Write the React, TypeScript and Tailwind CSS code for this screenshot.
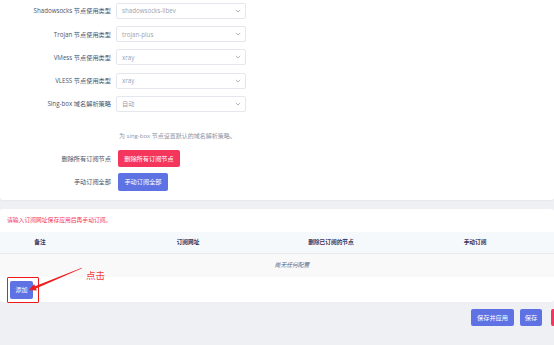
import React from "react";

const Chevron = () => (
  <svg width="6" height="4" viewBox="0 0 6 4" className="shrink-0">
    <path d="M0.8 0.9 L3 3 L5.2 0.9" fill="none" stroke="#9aa5b5" strokeWidth="0.8" />
  </svg>
);

const SelectRow = ({ label, value }: { label: string; value: string }) => (
  <div className="flex items-center h-[16px]">
    <div className="w-[111px] text-right text-[6.2px] text-[#4a5468] whitespace-nowrap">{label}</div>
    <div className="ml-[5px] w-[130px] h-[16px] border border-[#e4e8ee] rounded-[2px] bg-white flex items-center justify-between pl-[5px] pr-[4px]">
      <span className="text-[6.2px] text-[#9aa3b2] whitespace-nowrap">{value}</span>
      <Chevron />
    </div>
  </div>
);

export default function App() {
  return (
    <div className="relative w-[554px] h-[345px] overflow-hidden bg-[#eff0f3] font-['Open_Sans','Noto_Sans_CJK_SC',sans-serif]">
      {/* Panel 1 */}
      <div className="bg-white h-[200px] pt-[3px] rounded-b-[3px] shadow-[0_1px_2px_rgba(0,0,0,0.04)]">
        <div className="flex flex-col gap-[7.2px]">
          <SelectRow label="Shadowsocks 节点使用类型" value="shadowsocks-libev" />
          <SelectRow label="Trojan 节点使用类型" value="trojan-plus" />
          <SelectRow label="VMess 节点使用类型" value="xray" />
          <SelectRow label="VLESS 节点使用类型" value="xray" />
          <SelectRow label="Sing-box 域名解析策略" value="自动" />
        </div>
        <div className="pl-[119px] mt-[20px] h-[9px] leading-[9px] text-[6px] text-[#8a94a6] whitespace-nowrap">
          为 sing-box 节点设置默认的域名解析策略。
        </div>
        <div className="flex items-center mt-[9px] h-[17px]">
          <div className="w-[111px] text-right text-[6.2px] text-[#4a5468]">删除所有订阅节点</div>
          <div className="ml-[7px] w-[62px] h-[17px] rounded-[2px] bg-[#f5365c] text-white text-[6.2px] flex items-center justify-center whitespace-nowrap">
            删除所有订阅节点
          </div>
        </div>
        <div className="flex items-center mt-[6px] h-[18px]">
          <div className="w-[111px] text-right text-[6.2px] text-[#4a5468]">手动订阅全部</div>
          <div className="ml-[7px] w-[50px] h-[18px] rounded-[2px] bg-[#5e72e4] text-white text-[6.2px] flex items-center justify-center whitespace-nowrap">
            手动订阅全部
          </div>
        </div>
      </div>

      {/* Panel 2 */}
      <div className="mt-[9px] bg-white h-[93px] rounded-[3px] overflow-hidden">
        <div className="h-[23px] flex items-center pl-[7px] text-[5.8px] text-[#f5365c] whitespace-nowrap">
          请输入订阅网址保存应用后再手动订阅。
        </div>
        <div className="w-[584px] flex h-[22px] bg-[#f6f9fc] border-b border-[#e9ecef] text-[5.7px] font-bold text-[#32325d]">
          <div className="w-[80px] shrink-0 flex items-center justify-center">备注</div>
          <div className="w-[216px] shrink-0 flex items-center justify-center">订阅网址</div>
          <div className="w-[70px] shrink-0 flex items-center justify-center whitespace-nowrap">删除已订阅的节点</div>
          <div className="w-[218px] shrink-0 flex items-center justify-center">手动订阅</div>
        </div>
        <div className="w-[584px] h-[23px] bg-[#f9f9fa] flex items-center justify-center text-[5.8px] italic text-[#525f7f]">
          尚无任何配置
        </div>
        <div className="pl-[10px] pt-[4px]">
          <div className="w-[23px] h-[18px] rounded-[2px] bg-[#5e72e4] text-white text-[6px] flex items-center justify-center">
            添加
          </div>
        </div>
      </div>

      {/* Bottom buttons */}
      <div className="flex mt-[7px] pl-[471px] h-[17px]">
        <div className="w-[43px] shrink-0 rounded-[2px] bg-[#5e72e4] text-white text-[6.2px] flex items-center justify-center whitespace-nowrap">
          保存并应用
        </div>
        <div className="ml-[6px] w-[22px] shrink-0 rounded-[2px] bg-[#5e72e4] text-white text-[6.2px] flex items-center justify-center">
          保存
        </div>
        <div className="ml-[9px] w-[30px] shrink-0 rounded-[2px] bg-[#f5365c]" />
      </div>

      {/* Annotation overlay */}
      <div className="absolute left-[7px] top-[277px] w-[32px] h-[26px] border-[1.5px] border-[#f01818] rounded-[1px]" />
      <svg className="absolute left-0 top-0 pointer-events-none" width="554" height="345">
        <polygon
          points="82.1,268.3 36,288.4 36.8,290.6 29,290 34.2,284 35,286.2 81.9,267.7"
          fill="#ee1c1c"
        />
      </svg>
      <div className="absolute left-[86px] top-[269px] text-[9.5px] leading-[12px] text-[#f03c3c] font-['Noto_Sans_CJK_SC',sans-serif]">
        点击
      </div>
    </div>
  );
}
